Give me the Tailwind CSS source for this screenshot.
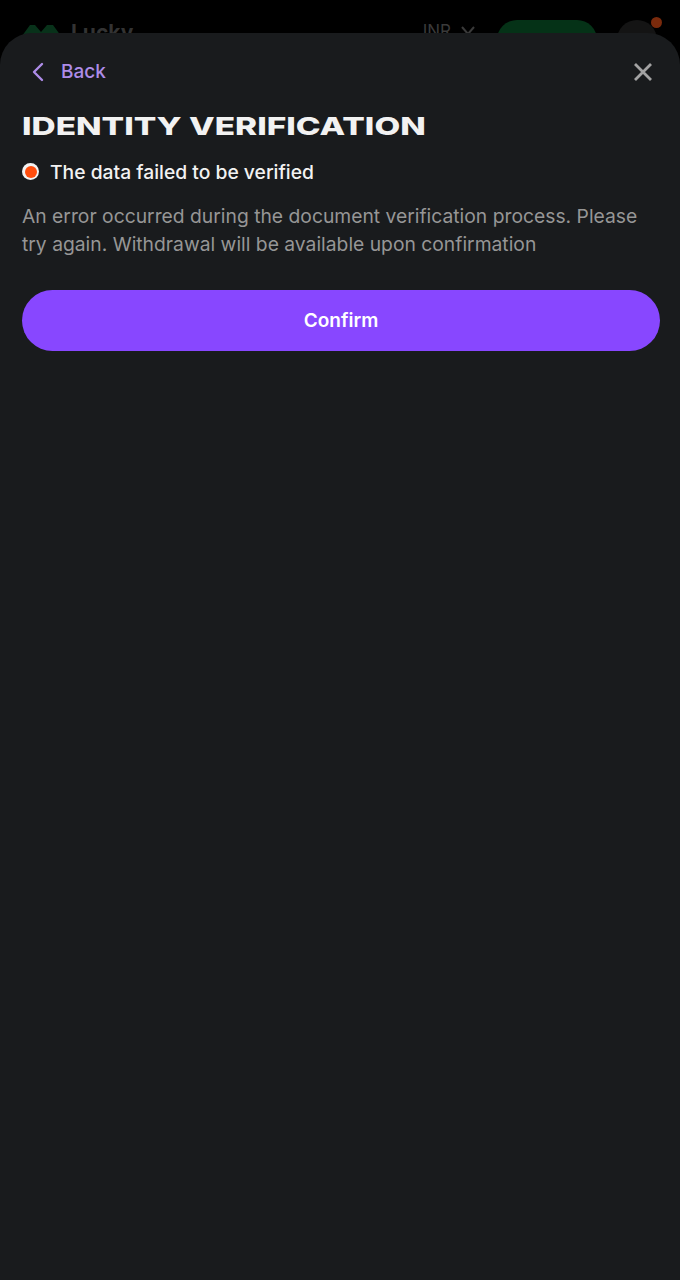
<!DOCTYPE html>
<html lang="en">
<head>
  <meta charset="UTF-8">
  <meta name="viewport" content="width=device-width, initial-scale=1.0">
  <title>Identity Verification</title>
  <script src="https://cdn.jsdelivr.net/npm/@tailwindcss/browser@4"></script>
</head>
<body class="bg-black font-['Inter',sans-serif]">
  <div class="relative w-[680px] h-[1280px] overflow-hidden bg-black">

    <!-- Page header, dimmed behind the sheet -->
    <div class="flex items-start h-[60px] pt-[20px] pl-[22px] pr-[23px]">
      <svg width="40" height="20" viewBox="0 0 40 20" class="mt-[2px]">
        <path d="M0 14 L8 3 L13 3 L19 10 L25 3 L31 3 L39 14 L39 20 L0 20 Z" fill="#08321a"/>
      </svg>
      <span class="ml-[9px] mt-[-1px] text-[21px] leading-[28px] font-bold text-[#333333]">Lucky</span>
      <span class="ml-auto text-[17px] leading-[22px] text-[#3a3a3a]">INR</span>
      <svg width="16" height="10" viewBox="0 0 16 10" class="ml-[9px] mt-[6px]">
        <path d="M2 1 L8 8 L14 1" fill="none" stroke="#3a3a3a" stroke-width="2"/>
      </svg>
      <div class="ml-[21px] w-[100px] h-[40px] rounded-[20px] bg-[#053217]"></div>
      <div class="relative ml-[20px] w-[40px] h-[40px] rounded-full bg-[#141414]">
        <div class="absolute top-[-3px] right-[-5px] w-[11px] h-[11px] rounded-full bg-[#7a2a0c]"></div>
      </div>
    </div>

    <!-- Bottom sheet -->
    <div class="absolute top-[33px] left-0 right-0 bottom-0 rounded-t-[32px] bg-[#191b1d] pl-[22px] pr-[20px]">
      <div class="flex items-center justify-between h-[28px] mt-[25px]">
        <div class="flex items-center">
          <svg width="16" height="20" viewBox="0 0 16 20" class="ml-[8px]">
            <path d="M12 2 L4 10 L12 18" fill="none" stroke="#ae8ce8" stroke-width="2.4" stroke-linecap="round" stroke-linejoin="round"/>
          </svg>
          <span class="ml-[15px] text-[19px] leading-[28px] font-medium text-[#ae8ce8]">Back</span>
        </div>
        <svg width="20" height="20" viewBox="0 0 20 20" class="mr-[7px]">
          <path d="M2 2 L18 18 M18 2 L2 18" fill="none" stroke="#a3a3a3" stroke-width="2.8"/>
        </svg>
      </div>

      <h1 class="mt-[22px] h-[35px] origin-left scale-x-[1.336] text-[25px] leading-[36px] font-extrabold whitespace-nowrap text-[#f2f2f2]">IDENTITY VERIFICATION</h1>

      <div class="flex items-center mt-[15px] h-[28px]">
        <div class="flex items-center justify-center w-[17px] h-[17px] rounded-full bg-[#f2f2f2] mt-[-1px]">
          <div class="w-[12px] h-[12px] rounded-full bg-[#ff4d0d]"></div>
        </div>
        <span class="ml-[11px] text-[19.3px] leading-[28px] font-medium text-[#f2f2f2]">The data failed to be verified</span>
      </div>

      <p class="mt-[16px] text-[19.3px] leading-[28px] text-[#969696]">An error occurred during the document verification process. Please try again. Withdrawal will be available upon confirmation</p>

      <button class="block w-full h-[61px] mt-[32px] pt-[2px] rounded-full bg-[#8847ff] text-[19px] font-semibold text-white">Confirm</button>
    </div>
  </div>
</body>
</html>
